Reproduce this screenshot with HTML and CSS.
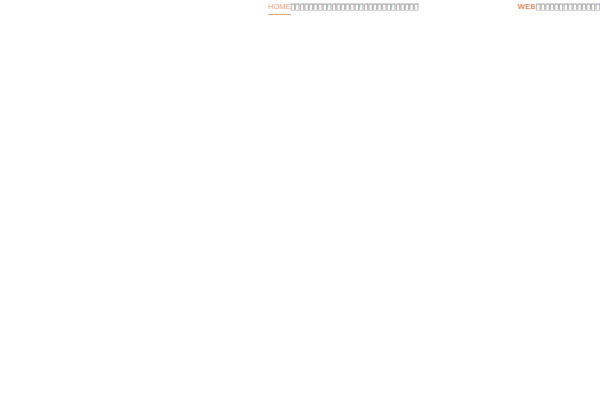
FILE: index.html
```html
<!DOCTYPE html>
<html>
<head>
<meta charset="utf-8">
<link rel="stylesheet" href="styles.css">
</head>
<body>
<header class="header">
  <nav class="nav">
    <a class="nav-item active">HOME</a><span class="nav-rest">&#xE000;&#xE000;&#xE000;&#xE000;&#xE000;&#xE000;&#xE000;&#xE000;&#xE000;&#xE000;&#xE000;&#xE000;&#xE000;&#xE000;&#xE000;&#xE000;&#xE000;&#xE000;&#xE000;&#xE000;&#xE000;&#xE000;&#xE000;&#xE000;&#xE000;&#xE000;&#xE000;&#xE000;</span>
  </nav>
  <div class="side">
    <span class="side-accent">WEB</span><span class="side-rest">&#xE000;&#xE000;&#xE000;&#xE000;&#xE000;&#xE000;&#xE000;&#xE000;&#xE000;&#xE000;&#xE000;&#xE000;&#xE000;&#xE000;</span>
  </div>
</header>
</body>
</html>
```
FILE: styles.css
```css
html, body {
  margin: 0;
  padding: 0;
  background: #ffffff;
}
body {
  width: 600px;
  height: 400px;
  overflow: hidden;
  font-family: "Liberation Sans", "DejaVu Sans", sans-serif;
}
.header {
  display: flex;
  align-items: flex-start;
  padding-left: 268px;
  font-size: 7.5px;
  line-height: 13px;
  white-space: nowrap;
}
.nav {
  display: flex;
  align-items: flex-start;
}
.nav-item {
  color: #eaa07c;
  padding-bottom: 1px;
  border-bottom: 1px solid #eaa584;
}
.nav-rest,
.side-rest {
  font-family: "DejaVu Sans", sans-serif;
  color: #444444;
  letter-spacing: 0.07px;
}
.side {
  margin-left: auto;
  display: flex;
}
.side-accent {
  color: #dd7440;
  letter-spacing: 0.4px;
  -webkit-text-stroke: 0.15px #dd7440;
}
```
